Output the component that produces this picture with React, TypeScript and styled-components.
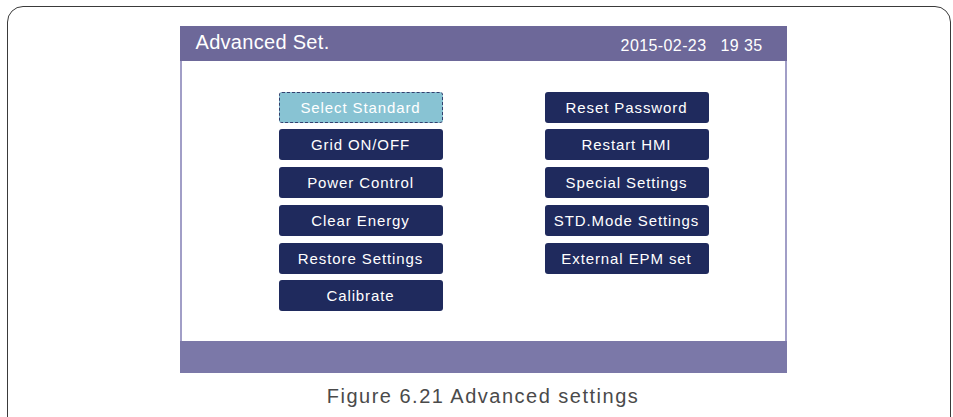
import styled, { createGlobalStyle } from "styled-components";

const GlobalStyle = createGlobalStyle`
  html, body {
    margin: 0;
    padding: 0;
    background: #ffffff;
    overflow: hidden;
  }
  body {
    font-family: "Liberation Sans", Arial, sans-serif;
  }
`;

const leftItems = [
  "Select Standard",
  "Grid ON/OFF",
  "Power Control",
  "Clear Energy",
  "Restore Settings",
  "Calibrate",
];

const rightItems = [
  "Reset Password",
  "Restart HMI",
  "Special Settings",
  "STD.Mode Settings",
  "External EPM set",
];

const App = () => {
  return (
    <>
      <GlobalStyle />
      <Page>
        <Frame>
          <Screen>
            <TitleBar>
              <Title>Advanced Set.</Title>
              <Clock>
                <span>2015-02-23</span>
                <span>19 35</span>
              </Clock>
            </TitleBar>
            <ScreenBody>
              <Column>
                {leftItems.map((label, i) => (
                  <MenuButton key={label} $selected={i === 0}>
                    {label}
                  </MenuButton>
                ))}
              </Column>
              <Column>
                {rightItems.map((label) => (
                  <MenuButton key={label}>{label}</MenuButton>
                ))}
              </Column>
            </ScreenBody>
            <StatusBar />
          </Screen>
          <Caption>Figure 6.21 Advanced settings</Caption>
        </Frame>
      </Page>
    </>
  );
};

const Page = styled.div`
  width: 953px;
  height: 417px;
  padding: 6px 0 0 7px;
  box-sizing: border-box;
  overflow: hidden;
`;

const Frame = styled.div`
  width: 944px;
  height: 440px;
  box-sizing: border-box;
  border: 1.5px solid #3a3a3a;
  border-radius: 16px;
  padding: 18.5px 0 0 171.5px;
  display: flex;
  flex-direction: column;
  align-items: flex-start;
`;

const Screen = styled.div`
  width: 607px;
  display: flex;
  flex-direction: column;
`;

const TitleBar = styled.div`
  height: 35px;
  background: #6d6899;
  display: flex;
  align-items: center;
  justify-content: space-between;
  padding: 0 24px 0 16px;
  color: #ffffff;
`;

const Title = styled.div`
  font-size: 20px;
  letter-spacing: 0.3px;
  margin-top: -2px;
`;

const Clock = styled.div`
  display: flex;
  gap: 14px;
  font-size: 16px;
  letter-spacing: 0.4px;
  margin-top: 5px;
`;

const ScreenBody = styled.div`
  height: 280px;
  box-sizing: border-box;
  border-left: 2px solid #a19ec7;
  border-right: 2px solid #a19ec7;
  background: #ffffff;
  display: flex;
  gap: 102px;
  padding: 31px 0 0 97px;
`;

const Column = styled.div`
  width: 164px;
  display: flex;
  flex-direction: column;
  gap: 6.8px;
`;

const MenuButton = styled.div<{ $selected?: boolean }>`
  height: 31px;
  box-sizing: border-box;
  border-radius: 3px;
  background: ${(p) => (p.$selected ? "#88c3d3" : "#1f2a5d")};
  border: ${(p) => (p.$selected ? "1.5px dashed #34406f" : "none")};
  color: #ffffff;
  font-size: 15px;
  letter-spacing: 0.9px;
  display: flex;
  align-items: center;
  justify-content: center;
  white-space: nowrap;
`;

const StatusBar = styled.div`
  height: 32px;
  background: #7b78a8;
`;

const Caption = styled.div`
  width: 607px;
  margin-top: 12px;
  text-align: center;
  font-size: 20px;
  letter-spacing: 1.5px;
  color: #4a4a4a;
`;

export default App;
